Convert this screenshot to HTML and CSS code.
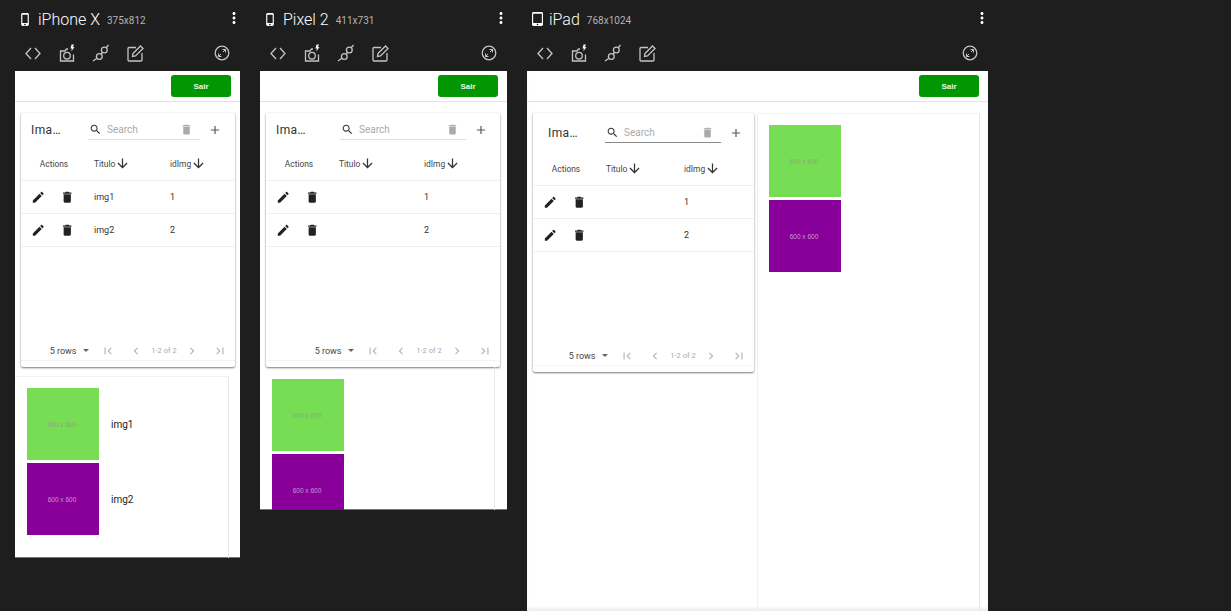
FILE: index.html
```html
<!DOCTYPE html>
<html lang="en">
<head>
    <meta charset="UTF-8">
    <title>Device preview</title>
    <link rel="stylesheet" href="styles.css">
</head>
<body>
    <svg class="sprites" xmlns="http://www.w3.org/2000/svg">
        <symbol id="i-phone" viewBox="5 1 13 22"><path d="M15.5 1h-8C6.12 1 5 2.12 5 3.5v17C5 21.88 6.12 23 7.5 23h8c1.38 0 2.5-1.12 2.5-2.5v-17C18 2.12 16.88 1 15.5 1zm-4 21c-.83 0-1.5-.67-1.5-1.5s.67-1.5 1.5-1.5 1.5.67 1.5 1.5-.67 1.5-1.5 1.5zm4.5-4H7V4h9v14z"/></symbol>
        <symbol id="i-tablet" viewBox="2 0 19 24"><path d="M18.5 0h-14C3.12 0 2 1.12 2 2.5v19C2 22.88 3.12 24 4.5 24h14c1.38 0 2.5-1.12 2.5-2.5v-19C21 1.12 19.88 0 18.5 0zm-7 23c-.83 0-1.5-.67-1.5-1.5s.67-1.5 1.5-1.5 1.5.67 1.5 1.5-.67 1.5-1.5 1.5zm7.5-4H4V3h15v16z"/></symbol>
        <symbol id="i-more" viewBox="0 0 24 24"><path d="M12 8c1.1 0 2-.9 2-2s-.9-2-2-2-2 .9-2 2 .9 2 2 2zm0 2c-1.1 0-2 .9-2 2s.9 2 2 2 2-.9 2-2-.9-2-2-2zm0 6c-1.1 0-2 .9-2 2s.9 2 2 2 2-.9 2-2-.9-2-2-2z"/></symbol>
        <symbol id="i-code" viewBox="0 0 20 20"><path class="line" d="M8 5 3 10.500 8 16M12 5l5 5.500-5 5.500"/></symbol>
        <symbol id="i-camera" viewBox="0 0 20 20"><path class="line" d="M16.500 11.500V18h-13V8H8l1.500-2H11"/><circle class="line" cx="10" cy="12.700" r="3.300"/><path class="bolt" d="M14.500 1.500H17l-1 2.500h1.500l-3.200 4.500.6-3h-1.500z"/></symbol>
        <symbol id="i-plug" viewBox="0 0 20 20"><path class="line" d="M2 18l4.300-3M10.200 11.300l1.300-2M15 5l2.500-3"/><circle class="line" cx="8.300" cy="13.500" r="2.900"/><circle class="line" cx="13.300" cy="7" r="2.900"/></symbol>
        <symbol id="i-note" viewBox="0 0 20 20"><path class="line" d="M11 4.500H4a1 1 0 0 0-1 1V17a1 1 0 0 0 1 1h12a1 1 0 0 0 1-1V10"/><path class="line" d="M8 10.500 15.500 3 18 5.500 10.500 13 7.500 13.500z"/></symbol>
        <symbol id="i-rotate" viewBox="0 0 20 20"><circle class="line" cx="10" cy="10" r="6.800"/><path class="line thin" d="M10.500 6.500h3v3M13.500 6.500l-2.500 2.500M9.500 13.500h-3v-3M6.500 13.500l2.500-2.500"/></symbol>
        <symbol id="i-search" viewBox="0 0 24 24"><path d="M15.500 14h-.79l-.28-.27C15.410 12.590 16 11.110 16 9.500 16 5.910 13.090 3 9.500 3S3 5.910 3 9.500 5.910 16 9.500 16c1.610 0 3.090-.59 4.230-1.570l.27.28v.79l5 4.990L20.490 19l-4.990-5zm-6 0C7.010 14 5 11.990 5 9.500S7.010 5 9.500 5 14 7.010 14 9.500 11.990 14 9.500 14z"/></symbol>
        <symbol id="i-trash" viewBox="0 0 24 24"><path d="M6 19c0 1.100.9 2 2 2h8c1.100 0 2-.9 2-2V7H6v12zM19 4h-3.500l-1-1h-5l-1 1H5v2h14V4z"/></symbol>
        <symbol id="i-add" viewBox="0 0 24 24"><path d="M19 13h-6v6h-2v-6H5v-2h6V5h2v6h6v2z"/></symbol>
        <symbol id="i-edit" viewBox="0 0 24 24"><path d="M3 17.250V21h3.750L17.810 9.940l-3.750-3.750L3 17.250zM20.710 7.040c.39-.39.39-1.020 0-1.410l-2.340-2.340c-.39-.39-1.020-.39-1.410 0l-1.830 1.830 3.750 3.750 1.830-1.830z"/></symbol>
        <symbol id="i-down" viewBox="0 0 24 24"><path d="M20 12l-1.410-1.410L13 16.170V4h-2v12.170l-5.580-5.590L4 12l8 8 8-8z"/></symbol>
        <symbol id="i-first" viewBox="0 0 24 24"><path d="M18.410 16.590L13.820 12l4.590-4.590L17 6l-6 6 6 6zM6 6h2v12H6z"/></symbol>
        <symbol id="i-prev" viewBox="0 0 24 24"><path d="M15.410 7.410L14 6l-6 6 6 6 1.410-1.410L10.830 12z"/></symbol>
        <symbol id="i-next" viewBox="0 0 24 24"><path d="M10 6L8.590 7.410 13.170 12l-4.580 4.590L10 18l6-6z"/></symbol>
        <symbol id="i-last" viewBox="0 0 24 24"><path d="M5.590 7.410L10.180 12l-4.590 4.590L7 18l6-6-6-6zM16 6h2v12h-2z"/></symbol>
    </svg>

    <main class="devices">
        <!-- iPhone X -->
        <section class="device iphone">
            <div class="device-head">
                <svg class="device-icon"><use href="#i-phone"/></svg>
                <span class="device-name">iPhone X</span>
                <span class="device-size">375x812</span>
                <svg class="more"><use href="#i-more"/></svg>
            </div>
            <div class="tools">
                <svg class="tool"><use href="#i-code"/></svg>
                <svg class="tool"><use href="#i-camera"/></svg>
                <svg class="tool"><use href="#i-plug"/></svg>
                <svg class="tool"><use href="#i-note"/></svg>
                <svg class="tool rotate"><use href="#i-rotate"/></svg>
            </div>
            <div class="screen">
                <div class="topbar"><button class="logout">Sair</button></div>
                <div class="content">
                    <div class="card">
                        <div class="toolbar">
                            <span class="card-title">Ima…</span>
                            <div class="search">
                                <svg class="search-icon"><use href="#i-search"/></svg>
                                <span class="search-text">Search</span>
                                <svg class="search-clear"><use href="#i-trash"/></svg>
                            </div>
                            <svg class="add"><use href="#i-add"/></svg>
                        </div>
                        <div class="row head">
                            <span class="actions-head">Actions</span>
                            <span class="col">Titulo<svg class="sort"><use href="#i-down"/></svg></span>
                            <span class="col">idImg<svg class="sort"><use href="#i-down"/></svg></span>
                        </div>
                        <div class="row">
                            <span class="actions"><svg class="act"><use href="#i-edit"/></svg><svg class="act"><use href="#i-trash"/></svg></span>
                            <span class="col">img1</span>
                            <span class="col">1</span>
                        </div>
                        <div class="row">
                            <span class="actions"><svg class="act"><use href="#i-edit"/></svg><svg class="act"><use href="#i-trash"/></svg></span>
                            <span class="col">img2</span>
                            <span class="col">2</span>
                        </div>
                        <div class="pager">
                            <span class="rows">5 rows</span>
                            <span class="caret"></span>
                            <svg class="page-btn"><use href="#i-first"/></svg>
                            <svg class="page-btn"><use href="#i-prev"/></svg>
                            <span class="page-text">1-2 of 2</span>
                            <svg class="page-btn"><use href="#i-next"/></svg>
                            <svg class="page-btn"><use href="#i-last"/></svg>
                        </div>
                    </div>
                    <div class="gallery">
                        <div class="shot"><div class="thumb green">600 x 600</div><span class="shot-name">img1</span></div>
                        <div class="shot"><div class="thumb purple">600 x 600</div><span class="shot-name">img2</span></div>
                    </div>
                </div>
            </div>
        </section>

        <!-- Pixel 2 -->
        <section class="device pixel">
            <div class="device-head">
                <svg class="device-icon"><use href="#i-phone"/></svg>
                <span class="device-name">Pixel 2</span>
                <span class="device-size">411x731</span>
                <svg class="more"><use href="#i-more"/></svg>
            </div>
            <div class="tools">
                <svg class="tool"><use href="#i-code"/></svg>
                <svg class="tool"><use href="#i-camera"/></svg>
                <svg class="tool"><use href="#i-plug"/></svg>
                <svg class="tool"><use href="#i-note"/></svg>
                <svg class="tool rotate"><use href="#i-rotate"/></svg>
            </div>
            <div class="screen">
                <div class="topbar"><button class="logout">Sair</button></div>
                <div class="content">
                    <div class="card">
                        <div class="toolbar">
                            <span class="card-title">Ima…</span>
                            <div class="search">
                                <svg class="search-icon"><use href="#i-search"/></svg>
                                <span class="search-text">Search</span>
                                <svg class="search-clear"><use href="#i-trash"/></svg>
                            </div>
                            <svg class="add"><use href="#i-add"/></svg>
                        </div>
                        <div class="row head">
                            <span class="actions-head">Actions</span>
                            <span class="col">Titulo<svg class="sort"><use href="#i-down"/></svg></span>
                            <span class="col">idImg<svg class="sort"><use href="#i-down"/></svg></span>
                        </div>
                        <div class="row">
                            <span class="actions"><svg class="act"><use href="#i-edit"/></svg><svg class="act"><use href="#i-trash"/></svg></span>
                            <span class="col"></span>
                            <span class="col">1</span>
                        </div>
                        <div class="row">
                            <span class="actions"><svg class="act"><use href="#i-edit"/></svg><svg class="act"><use href="#i-trash"/></svg></span>
                            <span class="col"></span>
                            <span class="col">2</span>
                        </div>
                        <div class="pager">
                            <span class="rows">5 rows</span>
                            <span class="caret"></span>
                            <svg class="page-btn"><use href="#i-first"/></svg>
                            <svg class="page-btn"><use href="#i-prev"/></svg>
                            <span class="page-text">1-2 of 2</span>
                            <svg class="page-btn"><use href="#i-next"/></svg>
                            <svg class="page-btn"><use href="#i-last"/></svg>
                        </div>
                    </div>
                    <div class="gallery">
                        <div class="shot"><div class="thumb green">600 x 600</div></div>
                        <div class="shot"><div class="thumb purple">600 x 600</div></div>
                    </div>
                </div>
            </div>
        </section>

        <!-- iPad -->
        <section class="device ipad">
            <div class="device-head">
                <svg class="device-icon"><use href="#i-tablet"/></svg>
                <span class="device-name">iPad</span>
                <span class="device-size">768x1024</span>
                <svg class="more"><use href="#i-more"/></svg>
            </div>
            <div class="tools">
                <svg class="tool"><use href="#i-code"/></svg>
                <svg class="tool"><use href="#i-camera"/></svg>
                <svg class="tool"><use href="#i-plug"/></svg>
                <svg class="tool"><use href="#i-note"/></svg>
                <svg class="tool rotate"><use href="#i-rotate"/></svg>
            </div>
            <div class="screen">
                <div class="topbar"><button class="logout">Sair</button></div>
                <div class="content">
                    <div class="card">
                        <div class="toolbar">
                            <span class="card-title">Ima…</span>
                            <div class="search">
                                <svg class="search-icon"><use href="#i-search"/></svg>
                                <span class="search-text">Search</span>
                                <svg class="search-clear"><use href="#i-trash"/></svg>
                            </div>
                            <svg class="add"><use href="#i-add"/></svg>
                        </div>
                        <div class="row head">
                            <span class="actions-head">Actions</span>
                            <span class="col">Titulo<svg class="sort"><use href="#i-down"/></svg></span>
                            <span class="col">idImg<svg class="sort"><use href="#i-down"/></svg></span>
                        </div>
                        <div class="row">
                            <span class="actions"><svg class="act"><use href="#i-edit"/></svg><svg class="act"><use href="#i-trash"/></svg></span>
                            <span class="col"></span>
                            <span class="col">1</span>
                        </div>
                        <div class="row">
                            <span class="actions"><svg class="act"><use href="#i-edit"/></svg><svg class="act"><use href="#i-trash"/></svg></span>
                            <span class="col"></span>
                            <span class="col">2</span>
                        </div>
                        <div class="pager">
                            <span class="rows">5 rows</span>
                            <span class="caret"></span>
                            <svg class="page-btn"><use href="#i-first"/></svg>
                            <svg class="page-btn"><use href="#i-prev"/></svg>
                            <span class="page-text">1-2 of 2</span>
                            <svg class="page-btn"><use href="#i-next"/></svg>
                            <svg class="page-btn"><use href="#i-last"/></svg>
                        </div>
                    </div>
                    <div class="gallery">
                        <div class="shot"><div class="thumb green">600 x 600</div></div>
                        <div class="shot"><div class="thumb purple">600 x 600</div></div>
                    </div>
                </div>
            </div>
        </section>
    </main>
</body>
</html>
```

FILE: styles.css
```css
* { box-sizing: border-box; }
html, body { height: 100%; }
body { margin: 0; background-color: #1e1e1e; font-family: Roboto, "Liberation Sans", sans-serif; overflow: hidden; }
.sprites { display: none; }
svg { fill: currentColor; display: block; flex: none; }

/* per device sizes */
.iphone { --w: 225px; --h: 487px; --pad: 10px; --title: 57px; --search: 112px; --add-gap: 8px; --c2: 76px; --toolbar: 34px; --card-w: 214px; --card-h: 254px; --gallery-right: 11px; }
.pixel { --w: 247px; --h: 439px; --pad: 10px; --title: 64px; --search: 126px; --add-gap: 8px; --c2: 85px; --toolbar: 34px; --card-w: 234px; --card-h: 254px; --gallery-right: 12px; }
.ipad { --w: 461px; --h: 540px; --pad: 15px; --title: 57px; --search: 116px; --add-gap: 8px; --c2: 78px; --toolbar: 39px; --card-w: 221px; --card-h: 259px; --gallery-right: 9px; }

.devices { display: flex; gap: 20px; padding-left: 15px; align-items: flex-start; }
.device { width: var(--w); flex: none; }

.device-head { height: 38px; display: flex; align-items: center; color: #fff; padding-left: 6px; }
.device-icon { width: 8px; height: 13px; margin-right: 9px; }
.device-name { font-size: 16px; font-weight: 300; }
.device-size { font-size: 10px; color: #b4b4b4; margin: 3px 0 0 7px; }
.more { width: 18px; height: 18px; margin: -3px -3px 0 auto; }
.ipad .device-icon { width: 11px; height: 14px; margin: 0 6px 0 -1px; }

.tools { height: 33px; padding: 0 8px 3px; display: flex; align-items: center; gap: 14px; color: #c8c8c8; }
.tool { width: 20px; height: 20px; }
.rotate { margin-left: auto; }
.line { fill: none; stroke: #c4c4c4; stroke-width: 1.3; }
.thin { stroke-width: 1; }
.bolt { fill: #eee; }

.screen { width: var(--w); height: var(--h); background-color: #fff; overflow: hidden; display: flex; flex-direction: column; box-shadow: inset 0 -1px 0 #777; }
.ipad .screen { box-shadow: inset 0 -3px 3px rgba(0, 0, 0, .07); }
.topbar { height: 31px; flex: none; display: flex; justify-content: flex-end; align-items: flex-start; padding: 4px 9px 0 0; border-bottom: 1px solid #e2e2e2; }
.logout { width: 60px; height: 22px; padding: 0; border: none; border-radius: 3px; background-color: #029702; color: #e8f8e8; font: bold 8px "Liberation Sans", sans-serif; }

.content { flex: 1; display: flex; flex-direction: column; padding-top: 11px; min-height: 0; }
.ipad .content { flex-direction: row; }

/* table card */
.card { width: var(--card-w); height: var(--card-h); flex: none; margin-left: 6px; display: flex; flex-direction: column; border-radius: 2px; box-shadow: 0 1px 2px rgba(0, 0, 0, .5), 0 0 2px rgba(0, 0, 0, .08); }
.toolbar { height: var(--toolbar); flex: none; display: flex; align-items: center; padding-left: var(--pad); }
.card-title { width: var(--title); font-size: 12px; color: #333; letter-spacing: .4px; }
.search { width: var(--search); height: 20px; display: flex; align-items: center; padding: 0 7px 0 1px; border-bottom: 1px solid #ddd; }
.ipad .search { border-bottom-color: #8a8a8a; }
.search-icon { width: 13px; height: 13px; color: #333; margin-right: 5px; }
.search-text { flex: 1; font-size: 10px; color: #aaa; }
.search-clear { width: 13px; height: 13px; color: #aaa; }
.add { width: 14px; height: 14px; color: #555; margin-left: var(--add-gap); }

.row { height: 33px; flex: none; display: grid; grid-template-columns: 73px var(--c2) 1fr; align-items: center; border-bottom: 1px solid #f0f0f0; font-size: 9px; color: #333; }
.head { height: 34px; color: #444; font-size: 8.400px; }
.actions-head { text-align: center; width: 66px; }
.actions { display: flex; gap: 14.500px; padding: 1px 0 0 10px; color: #222; }
.act { width: 14.500px; height: 14.500px; }
.col { display: flex; align-items: center; }
.sort { width: 15px; height: 15px; color: #333; }

.pager { margin-top: auto; margin-bottom: 6px; height: 20px; flex: none; display: flex; justify-content: flex-end; align-items: center; padding-right: 1px; border-bottom: 1px solid #f4f4f4; }
.rows { font-size: 9px; color: #444; margin-right: 6px; }
.caret { width: 0; height: 0; border: 3.500px solid transparent; border-top: 3.500px solid #666; border-bottom: 0; margin-right: 5.500px; }
.page-btn { width: 14px; height: 14px; margin: 0 7px; color: #b4b4b4; }
.page-text { width: 28px; font-size: 7.500px; color: #aaa; text-align: center; white-space: nowrap; }

/* image list */
.gallery { flex: 1; margin: 9px var(--gallery-right) 0 0; padding: 11px 0 0 12px; border-top: 1px solid #f2f2f2; border-right: 1px solid #e8e8e8; min-height: 0; }
.pixel .gallery { margin-top: 0; padding-top: 12px; border-top: none; }
.ipad .gallery { margin: 0 8px 0 3px; padding-left: 11px; border-left: 1px solid #f0f0f0; }
.shot { display: flex; align-items: center; margin-bottom: 3px; }
.thumb { width: 72px; height: 72px; padding-right: 2px; display: flex; align-items: center; justify-content: center; font: 6.500px "Liberation Sans", sans-serif; }
.green { background-color: #77dd55; color: #89a97b; }
.purple { background-color: #880099; color: #c79ad0; }
.shot-name { margin: 1px 0 0 12px; font-size: 10px; color: #222; }
```
